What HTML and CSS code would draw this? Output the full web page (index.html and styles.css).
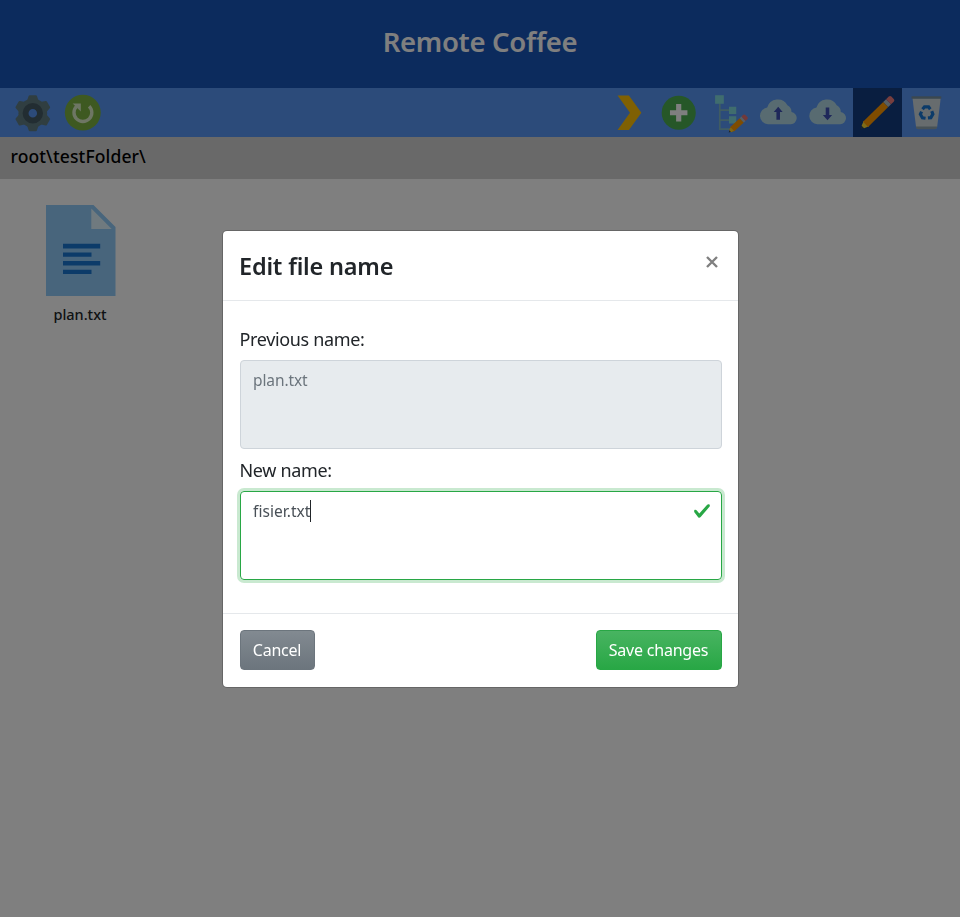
FILE: index.html
```html
<!DOCTYPE html>
<html lang="en">
<head>
<meta charset="utf-8">
<title>Remote Coffee</title>
<link rel="stylesheet" href="styles.css">
</head>
<body>
<header class="banner"><h1>Remote Coffee</h1></header>
<nav class="toolbar">
  <button class="tool" aria-label="Settings"><svg viewBox="8 88 50 49"><g fill="#607d83"><circle cx="33" cy="113" r="14.5"/><path id="tooth" d="M27 101l1.8-5.3q.3-.9 1.1-.9h6.2q.8 0 1.1.9l1.8 5.3z"/><use href="#tooth" transform="rotate(60 33 113)"/><use href="#tooth" transform="rotate(120 33 113)"/><use href="#tooth" transform="rotate(180 33 113)"/><use href="#tooth" transform="rotate(240 33 113)"/><use href="#tooth" transform="rotate(300 33 113)"/></g><circle cx="33" cy="113" r="7.3" fill="#5896f5" stroke="#455a64" stroke-width="6"/></svg></button>
  <button class="tool" aria-label="Refresh"><svg viewBox="57.6 88 50 49"><circle cx="82.6" cy="112.4" r="18.1" fill="#7cb342"/><path d="M89 106A9 9 0 1 1 76.4 106" fill="none" stroke="#dcedc8" stroke-width="3.4"/><path d="M72.4 103.2h8.2v8.2z" fill="#dcedc8"/></svg></button>
  <span class="gap"></span>
  <button class="tool" aria-label="Move"><svg viewBox="604.6 88 50 49"><path d="M617.3 95.2h11.4l12.6 17.4-12.6 17.4h-11.4l12.5-17.4z" fill="#ffc107"/></svg></button>
  <button class="tool" aria-label="Add"><svg viewBox="654.1 88 50 49"><circle cx="679" cy="112.6" r="17.2" fill="#4caf50"/><path d="M676.4 103.8h5.2v6.2h6.2v5.2h-6.2v6.2h-5.2v-6.2h-6.2V110h6.2z" fill="#fff"/></svg></button>
  <button class="tool" aria-label="Edit tree"><svg viewBox="704.1 88 50 49"><path d="M720 103v26h12M720 110h10M720 120h10" fill="none" stroke="#80b9c5" stroke-width="1.7"/><path d="M715.3 94.8h8.8v8.6h-8.8zM729.3 106.5h7.3v7.3h-7.3zM729.3 116h7.3v7.3h-7.3z" fill="#80dbdc"/><g transform="translate(729 132.5) rotate(-43)"><path d="M0 0L5-2.6V2.6z" fill="#424242"/><path d="M2 -1.5L6-3V3L2 1.5z" fill="#ffca28"/><path d="M5-3h13v6H5z" fill="#ff9800"/><path d="M18-3h2.4v6H18z" fill="#b0bec5"/><path d="M20.4-3h2.5q1.5 0 1.5 1.5v3q0 1.5-1.5 1.5h-2.5z" fill="#e57373"/></g></svg></button>
  <button class="tool" aria-label="Upload"><svg viewBox="753.6 88 50 49"><path class="cloud" d="M767.7 124.2a8.5 8.5 0 0 1-.8-16.9 11 11 0 0 1 20.4-2.2 7.4 7.4 0 0 1 4.1 6.6 6.3 6.3 0 0 1-.6 12.5z"/><path d="M778 106.5l4.5 5.4h-2.7v7.6h-3.6v-7.6h-2.7z" fill="#3f51b5"/></svg></button>
  <button class="tool" aria-label="Download"><svg viewBox="802.9 88 50 49"><path class="cloud" d="M817.3 124.2a8.5 8.5 0 0 1-.8-16.9 11 11 0 0 1 20.4-2.2 7.4 7.4 0 0 1 4.1 6.6 6.3 6.3 0 0 1-.6 12.5z"/><path d="M827.6 120.2l4.7-5.4h-2.9v-7.6h-3.6v7.6h-2.9z" fill="#3f51b5"/></svg></button>
  <button class="tool active" aria-label="Rename"><svg viewBox="853.2 88 50 49"><g transform="translate(861 129) rotate(-44.5)"><path d="M0 0L5-2.7V2.7z" fill="#37474f"/><path d="M3-1.8L8-3.8V3.8L3 1.8z" fill="#fdd835"/><path d="M6.8-3.6h28.5v7.2H6.8z" fill="#ff9800"/><path d="M35.3-3.6h4v7.2h-4z" fill="#b0bec5"/><path d="M39.3-3.6h3.8q1.9 0 1.9 1.9v3.4q0 1.9-1.9 1.9h-3.8z" fill="#ef7c7c"/></g></svg></button>
  <button class="tool" aria-label="Delete"><svg viewBox="902.2 88 50 49"><path d="M912.8 98h28.4l-3.5 28.5q-.3 2.3-2.7 2.3h-16q-2.4 0-2.7-2.3z" fill="#cfd8dc"/><path d="M911.8 96h30v2.4h-30z" fill="#78909c"/><path d="M916.1 126.4h21.7l-.3 1.1q-.3 1.6-2.6 1.6h-16q-2.3 0-2.6-1.6z" fill="#90a4ae"/><g fill="none" stroke="#1976d2" stroke-width="3.2"><path id="arc" d="M922.9 109.1l2-2.5h4.1l1.7 2.4"/><use href="#arc" transform="rotate(120 927 112.7)"/><use href="#arc" transform="rotate(240 927 112.7)"/></g></svg></button>
</nav>
<div class="path">root\testFolder\</div>
<main>
  <figure class="file">
    <svg viewBox="46 205.5 70 91"><path d="M46 205.5h47.5L115.5 227.5v69H46z" fill="#90caf9"/><path d="M91.3 209v20.5h20.4z" fill="#e1f5fe"/><path d="M63 244.3h37.2v4.6H63zM63 253h28.5v4.3H63zM63 261.5h37.2v4.6H63zM63 270.2h28.5v4.4H63z" fill="#1976d2"/></svg>
    <figcaption>plan.txt</figcaption>
  </figure>
</main>
<div class="backdrop">
  <section class="modal" role="dialog">
    <header class="modal-head"><h2>Edit file name</h2><button class="close" aria-label="Close"><svg viewBox="0 0 14 14"><path d="M2 2l10 10M12 2L2 12"/></svg></button></header>
    <div class="modal-body">
      <div class="label previous">Previous name:</div>
      <div class="field disabled">plan.txt</div>
      <div class="label next">New name:</div>
      <div class="field valid"><span>fisier.txt</span><i class="caret"></i><svg class="check" viewBox="0 0 8 8"><path fill="#28a745" d="M2.3 6.73L.6 4.53c-.4-1.04.46-1.4 1.1-.8l1.1 1.4 3.4-3.8c.6-.63 1.6-.27 1.2.7l-4 4.6c-.43.5-.8.4-1.1.1z"/></svg></div>
    </div>
    <footer class="modal-foot"><button class="btn cancel">Cancel</button><button class="btn save">Save changes</button></footer>
  </section>
</div>
</body>
</html>
```
FILE: styles.css
```css
* { box-sizing: border-box; }
body { margin: 0; height: 917px; overflow: hidden; background: #fff; color: #212529; font-family: "Noto Sans", sans-serif; font-size: 16px; }
button { font: inherit; border: 0; padding: 0; background: none; }
h1, h2 { margin: 0; font-weight: 500; }
.banner { height: 88px; padding-top: 22px; background: #1856ba; color: #fff; text-align: center; }
.banner h1 { font-size: 27.5px; line-height: 40px; font-weight: 600; letter-spacing: -.3px; }
.toolbar { height: 49.4px; display: flex; padding: 0 8px; background: #5896f5; }
.tool { width: 49.6px; height: 49.4px; flex: none; }
.tool svg { display: block; width: 100%; height: 100%; }
.tool.active { background: #123c80; }
.cloud { fill: #b0d7e3; }
.gap { flex: 1; }
.path { height: 41.6px; padding: 0 10.5px; background: #d3d3d3; color: #000; font-size: 17.5px; line-height: 39px; font-weight: 500; letter-spacing: .12px; }
main { padding: 26.5px 46px; }
.file { width: 70px; margin: 0; text-align: center; }
.file svg { display: block; width: 70px; height: 91px; }
.file figcaption { margin: 6px 1px 0 -1px; font-size: 14.5px; line-height: 24px; font-weight: 500; }
.backdrop { position: fixed; inset: 0; display: flex; justify-content: center; align-items: center; padding-left: 1px; background: rgba(0,0,0,.5); }
.modal { width: 517px; height: 458px; display: flex; flex-direction: column; background: #fff; border: 1px solid rgba(0,0,0,.2); background-clip: padding-box; border-radius: 5px; }
.modal-head { height: 70.5px; flex: none; display: flex; justify-content: space-between; padding: 15.5px 16px 0; border-bottom: 1px solid #e5e8eb; }
.modal-head h2 { font-size: 23.5px; line-height: 41px; font-weight: 600; letter-spacing: -.2px; }
.close { width: 14px; height: 14px; margin: 9px 3px 0 0; }
.close svg { display: block; width: 14px; height: 14px; fill: none; stroke: #808080; stroke-width: 2.4; }
.modal-body { flex: 1; padding: 23.5px 16.5px 0; }
.label { height: 35px; line-height: 28px; font-size: 18px; letter-spacing: -.35px; }
.next { margin-top: 7px; }
.field { position: relative; display: flex; height: 89px; padding: 6px 12.5px; border: 1px solid #ced4da; border-radius: 4px; color: #6c757d; font-size: 15.5px; line-height: 26px; letter-spacing: -.1px; }
.disabled { background: #e7ebee; }
.valid { border-color: #28a745; box-shadow: 0 0 0 3px rgba(40,167,69,.25); color: #495057; letter-spacing: .05px; }
.caret { width: 1px; height: 22px; margin-top: 2px; background: #212529; }
.check { position: absolute; right: 10px; top: 10px; width: 18px; height: 18px; }
.modal-foot { height: 73.5px; flex: none; display: flex; justify-content: space-between; padding: 16px 16.5px; border-top: 1px solid #e5e8eb; }
.btn { height: 39.5px; border-radius: 4px; color: #fff; font-size: 16px; line-height: 38px; letter-spacing: -.22px; }
.cancel { width: 75px; border: 1px solid #6c757d; background: linear-gradient(#828a91, #6c757d); }
.save { width: 126px; border: 1px solid #28a745; background: linear-gradient(#48b461, #28a745); }
```
